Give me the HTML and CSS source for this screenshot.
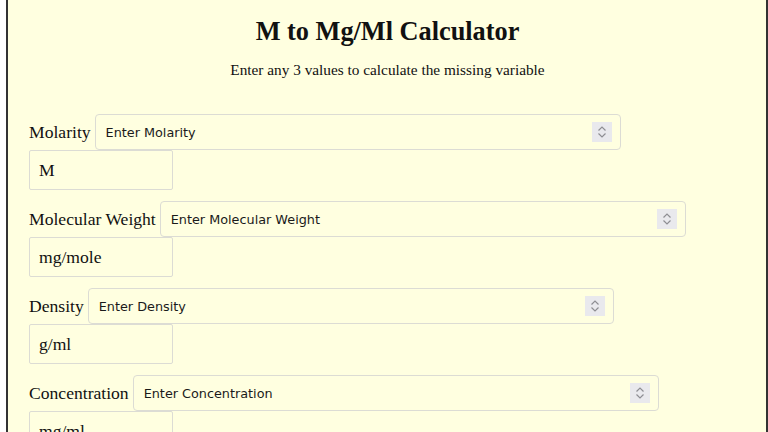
FILE: index.html
```html
<!DOCTYPE html>
<html lang="en">
  <head>
    <meta charset="UTF-8" />
    <meta name="viewport" content="width=device-width, initial-scale=1.0" />
    <title>M to Mg/Ml Calculator</title>
    <link rel="stylesheet" href="styles.css">
  </head>
  <body>
    <div class="calculator">
      <h1 class="title">M to Mg/Ml Calculator</h1>
      <p class="subtitle">Enter any 3 values to calculate the missing variable</p>

      <div class="field">
        <div class="field-line">
          <label for="molarity">Molarity</label>
          <div class="num-wrap">
            <input type="number" id="molarity" placeholder="Enter Molarity" />
            <span class="spin"><svg width="20" height="20" viewBox="0 0 20 20"><path d="M6.5 8.5 L10 5 L13.5 8.5 M6.5 11.5 L10 15 L13.5 11.5" fill="none" stroke="#8e8e93" stroke-width="1.2"/></svg></span>
          </div>
        </div>
        <select class="unit"><option>M</option></select>
      </div>

      <div class="field">
        <div class="field-line">
          <label for="mw">Molecular Weight</label>
          <div class="num-wrap">
            <input type="number" id="mw" placeholder="Enter Molecular Weight" />
            <span class="spin"><svg width="20" height="20" viewBox="0 0 20 20"><path d="M6.5 8.5 L10 5 L13.5 8.5 M6.5 11.5 L10 15 L13.5 11.5" fill="none" stroke="#8e8e93" stroke-width="1.2"/></svg></span>
          </div>
        </div>
        <select class="unit"><option>mg/mole</option></select>
      </div>

      <div class="field">
        <div class="field-line">
          <label for="density">Density</label>
          <div class="num-wrap">
            <input type="number" id="density" placeholder="Enter Density" />
            <span class="spin"><svg width="20" height="20" viewBox="0 0 20 20"><path d="M6.5 8.5 L10 5 L13.5 8.5 M6.5 11.5 L10 15 L13.5 11.5" fill="none" stroke="#8e8e93" stroke-width="1.2"/></svg></span>
          </div>
        </div>
        <select class="unit"><option>g/ml</option></select>
      </div>

      <div class="field">
        <div class="field-line">
          <label for="conc">Concentration</label>
          <div class="num-wrap">
            <input type="number" id="conc" placeholder="Enter Concentration" />
            <span class="spin"><svg width="20" height="20" viewBox="0 0 20 20"><path d="M6.5 8.5 L10 5 L13.5 8.5 M6.5 11.5 L10 15 L13.5 11.5" fill="none" stroke="#8e8e93" stroke-width="1.2"/></svg></span>
          </div>
        </div>
        <select class="unit"><option>mg/ml</option></select>
      </div>
    </div>
  </body>
</html>
```

FILE: styles.css
```css
body {
    margin: 0;
    background-color: #ffffff;
    font-family: "Liberation Serif", "Times New Roman", serif;
}

.calculator {
    margin-left: 6px;
    padding: 17px 20px 40px 21px;
    background-color: #ffffe0;
    border-left: 2px solid #333;
    border-right: 2px solid #333;
    color: #111;
}

.title {
    margin: 0;
    font-size: 26.3px;
    line-height: 30px;
    text-align: center;
}

.subtitle {
    margin: 14px 0 35px;
    font-size: 15.3px;
    line-height: 18px;
    text-align: center;
}

.field {
    margin-bottom: 11px;
}

.field-line {
    display: flex;
    align-items: center;
    gap: 4px;
}

.field-line label {
    font-size: 17.6px;
}

.num-wrap {
    position: relative;
    width: 526px;
}

.num-wrap input {
    box-sizing: border-box;
    width: 100%;
    height: 36px;
    padding: 0 10px;
    border: 1px solid #dcdcd4;
    border-radius: 4px;
    background-color: transparent;
    font-family: "DejaVu Sans", Tahoma, sans-serif;
    font-size: 12.8px;
    color: #1a1a1a;
    -moz-appearance: textfield;
}

.num-wrap input::placeholder {
    color: #1a1a1a;
}

.num-wrap input::-webkit-inner-spin-button,
.num-wrap input::-webkit-outer-spin-button {
    -webkit-appearance: none;
    margin: 0;
}

.spin {
    position: absolute;
    right: 9px;
    top: 8px;
    width: 20px;
    height: 20px;
    background-color: #e9e9ed;
}

.spin svg {
    display: block;
}

.unit {
    box-sizing: border-box;
    width: 144px;
    height: 40px;
    padding: 0 9px;
    border: 1px solid #dcdcd4;
    border-radius: 2px;
    background-color: transparent;
    font-family: "Liberation Serif", "Times New Roman", serif;
    font-size: 17.6px;
    color: #111;
    -webkit-appearance: none;
    appearance: none;
}
```
